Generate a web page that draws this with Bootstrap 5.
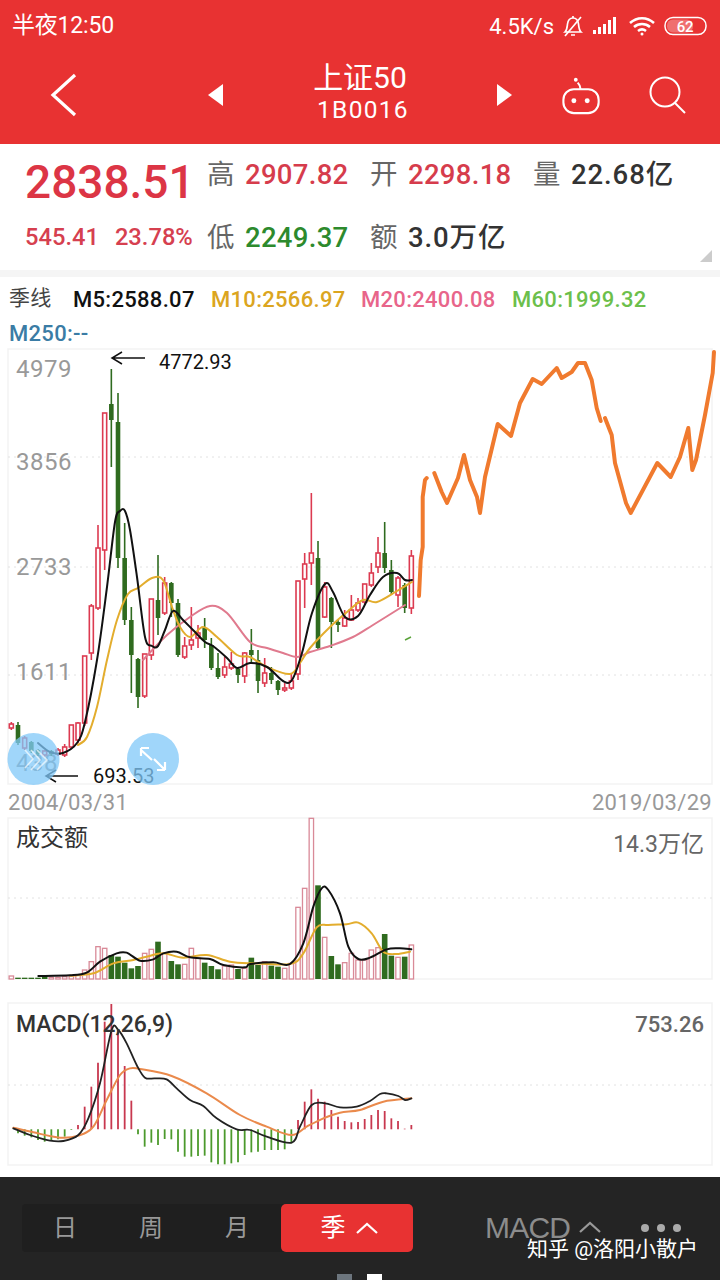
<!DOCTYPE html>
<html lang="zh">
<head>
<meta charset="utf-8">
<title>上证50</title>
<link href="https://cdn.jsdelivr.net/npm/bootstrap@5.3.0/dist/css/bootstrap.min.css" rel="stylesheet">
<style>
html,body{width:720px;height:1280px;overflow:hidden;background:#fff}
body,svg text{font-family:Roboto,"Noto Sans CJK SC",sans-serif}
.app-shell{width:720px;height:1280px;display:flex;flex-direction:column}
.top-red{background:#e83232;color:#fff;height:144px}
.status-row{height:52px;padding:0 12px;font-size:23px;letter-spacing:-.2px}
.status-net{font-size:22px;margin-right:8px;letter-spacing:0}
.nav-row{height:92px;padding-bottom:6px}
.nav-title{font-size:30px;line-height:34px;text-align:center}
.nav-code{font-size:24.5px;line-height:30px;letter-spacing:1.300px;text-align:center;padding-left:6px}
.nav-back{margin-left:50px;margin-right:129px}
.nav-mid{width:274px;margin-top:-4px}
.nav-robot{margin:0 47px 0 48px}
.quote-box{height:126px;color:#333}
.quote-row{display:flex;align-items:center}
.quote-row.first{height:62px}
.quote-row.second{height:64px}
.q-left{width:207px;padding-left:25px;flex:none}
.big-price{font-size:46px;font-weight:500;color:#dc3545;line-height:1;position:relative;top:7px}
.q-small{font-size:23.7px;font-weight:500;color:#d6404f;margin-right:16px}
.q-cell{width:163px;flex:none;display:flex;align-items:center;font-size:27.5px;white-space:nowrap}
.q-label{width:38px;color:#666;flex:none}
.q-num{font-weight:500;color:#d63c4c;letter-spacing:.3px}
.q-num.down{color:#2d8a2d}
.q-num.flat{color:#333;letter-spacing:.9px}
.corner-mark{position:absolute;right:8px;bottom:8px;width:0;height:0;border-left:12px solid transparent;border-bottom:12px solid #ccc}
.band{height:7px;background:#f5f5f5;flex:none}
.legend-row{height:38px;padding:6px 9px 0;font-size:22px;font-weight:500;white-space:nowrap;letter-spacing:.3px}
.legend-row2{height:32px;padding:2px 9px 0;font-size:22px;font-weight:500;color:#3a7ca5;letter-spacing:.3px}
.lg-name{width:64px;font-weight:400;color:#444;font-size:21px}
.lg-a{width:138px;color:#111}
.lg-b{width:150px;color:#dba520}
.lg-c{width:151px;color:#e8658a}
.lg-d{color:#6cbf4b}
.chart-svg{display:block;flex:none}
.date-row{height:30px;padding:0 8px;font-size:22px;color:#999;letter-spacing:.3px}
.bottom-bar{background:#242424;height:103px;margin-top:auto;position:relative;flex:none}
.seg-group{position:absolute;left:22px;top:27px;width:391px;height:48px;background:#1f1f1f;border-radius:4px;display:flex;color:#999}
.seg-item{display:flex;align-items:center;justify-content:center;width:86px;font-size:24px}
.seg-active{position:absolute;left:259px;top:0;width:132px;height:48px;background:#e83232;color:#fff;border-radius:5px;display:flex;align-items:center;justify-content:center;gap:9px;font-size:25px;padding-left:5px}
.macd-txt{position:absolute;left:485px;top:33px;font-family:"Liberation Sans",sans-serif;font-size:30px;color:#8c8c8c;letter-spacing:-.8px;line-height:36px}
.macd-chev{position:absolute;left:578px;top:43px}
.more-dots{position:absolute;left:641px;top:47px;gap:8px}
.more-dots span{width:8px;height:8px;background:#aaa;border-radius:50%;display:block}
.wm-text{position:absolute;left:527px;top:58px;font-size:21px;color:#fff;line-height:28px;white-space:nowrap}
.pager{position:absolute;left:337px;bottom:0;gap:15px}
.pager span{width:15px;height:6px;display:block}
</style>
</head>
<body>
<div class="app-shell">
  <div class="top-red flex-none">
    <div class="status-row d-flex align-items-center justify-content-between">
      <span>半夜12:50</span>
      <div class="d-flex align-items-center">
        <span class="status-net">4.5K/s</span>
        <svg width="22" height="24" viewBox="0 0 22 24" class="me-2" fill="none" stroke="#fff" stroke-width="1.7"><path d="M3 18c2-2 2-4 2.500-8C6 6 8 4 11 4s5 2 5.500 6c.4 4 .5 6 2.500 8z"/><path d="M9 21h4M11 2v2M3 22L19 3"/></svg>
        <svg width="28" height="22" viewBox="0 0 28 22" class="me-2" fill="#fff"><rect x="1" y="15" width="3" height="4"/><rect x="6" y="12" width="3" height="7"/><rect x="11" y="9" width="3" height="10"/><rect x="16" y="5" width="3" height="14"/><rect x="21" y="2" width="3" height="17"/></svg>
        <svg width="28" height="22" viewBox="0 0 28 22" class="me-2" fill="none" stroke="#fff" stroke-width="2.500"><path d="M2 8c7-6.500 17-6.500 24 0M6 12c4.500-4 11.500-4 16 0M10 16c2.500-2 5.500-2 8 0"/><circle cx="14" cy="19" r="1.500" fill="#fff" stroke="none"/></svg>
        <svg width="44" height="20" viewBox="0 0 44 20"><rect x="1" y="1.500" width="41" height="17" rx="8" fill="none" stroke="#fff" stroke-width="1.500"/><rect x="3" y="3.500" width="26" height="13" rx="6" fill="#fff" opacity=".3"/><text x="21" y="15.500" font-size="15" font-weight="500" fill="#fff" text-anchor="middle">62</text></svg>
      </div>
    </div>
    <div class="nav-row d-flex align-items-center">
      <svg class="nav-back flex-none" width="28" height="44" viewBox="0 0 28 44" fill="none" stroke="#fff" stroke-width="3.200"><path d="M25 2L3 22l22 20"/></svg>
      <svg class="flex-none" width="16" height="24" viewBox="0 0 16 24" fill="#fff"><path d="M16 1v22L1 12z"/></svg>
      <div class="nav-mid flex-none">
        <div class="nav-title">上证50</div>
        <div class="nav-code">1B0016</div>
      </div>
      <svg class="flex-none" width="16" height="24" viewBox="0 0 16 24" fill="#fff"><path d="M0 1v22l15-11z"/></svg>
      <svg class="flex-none nav-robot" width="41" height="40" viewBox="0 0 42 42" fill="none" stroke="#fff" stroke-width="2.200"><rect x="2" y="15" width="37" height="25" rx="11"/><path d="M20 15c0-3-1-5-3-7"/><circle cx="15" cy="5" r="2" fill="#fff" stroke="none"/><circle cx="13" cy="27" r="2.600" fill="#fff" stroke="none"/><circle cx="27" cy="27" r="2.600" fill="#fff" stroke="none"/></svg>
      <svg class="flex-none" width="38" height="38" viewBox="0 0 38 38" fill="none" stroke="#fff" stroke-width="2"><circle cx="16" cy="16" r="14.500"/><path d="M26 27l10 10"/></svg>
    </div>
  </div>

  <div class="quote-box position-relative flex-none">
    <div class="quote-row first">
      <div class="q-left"><span class="big-price">2838.51</span></div>
      <div class="q-cell"><span class="q-label">高</span><span class="q-num">2907.82</span></div>
      <div class="q-cell"><span class="q-label">开</span><span class="q-num">2298.18</span></div>
      <div class="q-cell"><span class="q-label">量</span><span class="q-num flat">22.68亿</span></div>
    </div>
    <div class="quote-row second">
      <div class="q-left d-flex"><span class="q-small">545.41</span><span class="q-small me-0">23.78%</span></div>
      <div class="q-cell"><span class="q-label">低</span><span class="q-num down">2249.37</span></div>
      <div class="q-cell"><span class="q-label">额</span><span class="q-num flat">3.0万亿</span></div>
    </div>
    <div class="corner-mark"></div>
  </div>
  <div class="band"></div>

  <div class="legend-row d-flex align-items-center">
    <span class="lg-name">季线</span><span class="lg-a">M5:2588.07</span><span class="lg-b">M10:2566.97</span><span class="lg-c">M20:2400.08</span><span class="lg-d">M60:1999.32</span>
  </div>
  <div class="legend-row2">M250:--</div>

  <svg id="mainChart" class="chart-svg" width="720" height="440" viewBox="0 347 720 440"></svg>
  <div class="date-row d-flex align-items-center justify-content-between"><span>2004/03/31</span><span>2019/03/29</span></div>
  <svg id="volChart" class="chart-svg" width="720" height="168" viewBox="0 817 720 168"></svg>
  <svg id="macdChart" class="chart-svg" width="720" height="182" viewBox="0 985 720 182"></svg>

  <div class="bottom-bar">
    <div class="seg-group">
      <div class="seg-item">日</div><div class="seg-item">周</div><div class="seg-item">月</div>
      <div class="seg-active">季<svg width="24" height="14" viewBox="0 0 24 14" fill="none" stroke="#fff" stroke-width="2.200"><path d="M2 12l10-9 10 9"/></svg></div>
    </div>
    <div class="macd-txt">MACD</div>
    <svg class="macd-chev" width="24" height="14" viewBox="0 0 24 14" fill="none" stroke="#999" stroke-width="2.200"><path d="M2 12l10-9 10 9"/></svg>
    <div class="more-dots d-flex"><span></span><span></span><span></span></div>
    <div class="wm-text">知乎 @洛阳小散户</div>
    <div class="pager d-flex"><span class="bg-secondary"></span><span class="bg-white"></span></div>
  </div>
</div>

<script>
const NS='http://www.w3.org/2000/svg';
const X=i=>11.33+6.667*i, RED='#dc3a50', GRN='#2f6b1f';
function el(p,t,a,txt){const e=document.createElementNS(NS,t);for(const k in a)e.setAttribute(k,a[k]);if(txt)e.textContent=txt;p.appendChild(e);return e}
function smooth(pts){let d='M'+pts[0];for(let i=0;i<pts.length-1;i++){const p0=pts[i-1]||pts[i],p1=pts[i],p2=pts[i+1],p3=pts[i+2]||p2;
 d+=`C${p1[0]+(p2[0]-p0[0])/6} ${p1[1]+(p2[1]-p0[1])/6} ${p2[0]-(p3[0]-p1[0])/6} ${p2[1]-(p3[1]-p1[1])/6} ${p2[0]} ${p2[1]}`}return d}
function line(s,pts,c,w){el(s,'path',{d:smooth(pts),fill:'none',stroke:c,'stroke-width':w,'stroke-linecap':'round','stroke-linejoin':'round'})}
function poly(s,pts,c,w){el(s,'polyline',{points:pts.join(' '),fill:'none',stroke:c,'stroke-width':w,'stroke-linecap':'round','stroke-linejoin':'round'})}
function frame(s,x,y,w,h,gy){el(s,'rect',{x,y,width:w,height:h,fill:'none',stroke:'#f3f3f3','stroke-width':1.5});
 gy.forEach(g=>el(s,'line',{x1:x,x2:x+w,y1:g,y2:g,stroke:'#e2e2e2','stroke-dasharray':'2 4','stroke-width':1}))}

/* MAIN */
const M=document.getElementById('mainChart');
frame(M,8,349,704,435,[457,567,675]);
[['4979',377],['3856',470],['2733',575],['1611',680]].forEach(a=>el(M,'text',{x:16,y:a[1],'font-size':24,fill:'#999','letter-spacing':.5},a[0]));
el(M,'text',{x:16,y:771,'font-size':24,fill:'#8a8a8a','letter-spacing':.5},'438');
const C=[['r',722,724,728,730],['g',722,725,743,745],['r',736,738,748,750],['g',741,742,751,753],['g',749,750,754,756],['r',750,751,755,757],['g',750,751,754,756],['r',748,750,754,756],
['r',744,747,755,757],['r',725,725,747,749],['r',722,723,740,743],['r',656,656,723,726],['r',604,606,653,660],['r',525,548,608,610],['r',413,413,550,570],
['g',369,404,420,467],['g',393,422,558,568],['g',523,558,620,625],['g',607,620,655,693],['g',658,659,697,708],['r',654,654,696,698],['r',599,599,655,660],['g',555,600,618,635],['r',577,583,613,615],['g',582,583,603,617],
['g',599,603,655,657],['r',637,646,657,659],['r',607,640,645,650],['r',625,633,638,648],['g',618,628,640,648],['g',638,645,668,670],['g',653,668,677,679],['r',657,667,675,678],['r',652,664,668,670],['g',667,669,675,683],
['r',652,653,676,683],['g',629,650,655,664],['g',650,660,681,693],['r',658,673,683,687],['g',667,673,680,684],['g',680,681,690,695],['r',683,688,690,692],['r',673,681,688,690],['r',581,581,674,680],['r',553,564,579,608],
['r',493,553,563,585],['g',541,558,648,650],['r',582,587,617,618],['g',597,598,622,648],['g',620,622,625,632],['r',610,618,626,627],['r',595,610,620,621],['r',598,603,610,612],['r',584,584,602,604],['r',563,573,585,587],
['r',537,553,567,573],['g',522,553,568,573],['g',560,570,592,595],['r',576,578,595,607],['g',583,585,608,613],['r',550,556,608,614]];
C.forEach((c,i)=>{const x=X(i),col=c[0]=='r'?RED:GRN;
 el(M,'line',{x1:x,x2:x,y1:c[1],y2:c[4],stroke:col,'stroke-width':1.6});
 if(c[0]=='r')el(M,'rect',{x:x-2,y:c[2],width:4,height:c[3]-c[2],fill:'#fff',stroke:col,'stroke-width':1.6});
 else el(M,'rect',{x:x-2.300,y:c[2],width:4.6,height:c[3]-c[2],fill:col});});
line(M,[[143,660],[167,635],[190,617],[210,606],[227,613],[250,642],[267,648],[283,653],[297,657],[310,652],[330,646],[353,637],[373,625],[405,605]],'#e07a8e',2);
line(M,[[78,745],[87,737],[97,707],[107,660],[117,620],[128,594],[138,588],[152,578],[163,580],[172,607],[180,627],[190,637],[203,627],[217,637],[237,655],[250,657],[267,667],[290,674],[300,663],[310,648],[330,627],[347,612],[363,600],[377,602],[397,591],[412,582]],'#e3ad2d',2);
line(M,[[38,743],[50,752],[63,753],[77,743],[85,722],[97,660],[107,587],[115,522],[120,511],[125,511],[130,530],[137,577],[145,637],[152,646],[158,646],[165,630],[173,611],[183,620],[193,630],[205,642],[213,646],[227,658],[237,668],[250,663],[267,667],[283,681],[292,680],[302,653],[312,613],[325,584],[333,592],[345,617],[358,616],[370,595],[383,577],[397,573],[405,580],[412,580]],'#111',2);
el(M,'line',{x1:405,y1:640,x2:411,y2:637,stroke:'#5aa33a','stroke-width':1.500});
const OR='#f07a2e';
poly(M,[[419,596],[420.7,560],[422.7,547],[422.7,497],[425,480],[426.7,478]],OR,4);
poly(M,[[434.3,473],[441.7,492],[447,503],[458,478],[464,455],[470,480],[477,497],[480,513],[485,477],[497.7,424],[511,436],[520,403],[532.7,379],[541.7,384],[556.7,368],[561.7,378],[571.7,372],[578,363],[585,363],[591.7,380],[596.7,408],[600.7,421]],OR,4);
poly(M,[[605,418],[611.7,435],[615,463],[626,503],[630.7,513],[657.3,463],[670.7,477],[680,457],[688.3,428],[692.3,470],[696,460],[705,415],[712.7,373],[714,352]],OR,4);
/* annotations */
el(M,'path',{d:'M145 358H112M122 352l-10 6 10 6M78 776H46M56 770l-10 6 10 6',fill:'none',stroke:'#111','stroke-width':1.500});
el(M,'text',{x:159,y:369,'font-size':20,fill:'#111'},'4772.93');
el(M,'text',{x:93,y:783,'font-size':20,fill:'#111'},'693.53');
/* round buttons */
el(M,'circle',{cx:33.5,cy:759,r:26,fill:'#80c8f8','fill-opacity':.75});
el(M,'circle',{cx:153,cy:759,r:26,fill:'#80c8f8','fill-opacity':.75});
el(M,'path',{d:'M25 750l8 9-8 9M31 750l9 10-9 10M37 750l10 10-10 10',fill:'none',stroke:'#fff','stroke-width':1.600,opacity:.65});
el(M,'path',{d:'M141 750l11 10M141 748v8M141 748h8M165 770l-11-11M165 770v-8M165 770h-8',fill:'none',stroke:'#fff','stroke-width':2.200});

/* VOLUME */
const V=document.getElementById('volChart');
frame(V,8,818,704,161,[898]);
el(V,'text',{x:16,y:846,'font-size':24,fill:'#333'},'成交额');
el(V,'text',{x:704,y:852,'font-size':23,fill:'#666','text-anchor':'end'},'14.3万亿');
const v='r498 g503 g503 g503 g503 g498 r502 r502 r500 r497 r495 r480 r455 r410 r415 g435 g440 g458 g475 g468 r430 r418 g395 r430 g453 g463 r463 r415 r445 g458 g468 g478 r468 r465 g477 r475 g443 g465 r455 g467 g470 r475 r460 r292 r235 r25 g226 r382 g438 g463 r458 r430 r450 r450 r420 r413 g372 g437 r442 g440 r405'.split(' ');
v.forEach((b,i)=>{const t=810+(+b.slice(1))/3,x=X(i),h=979-t;
 if(b[0]=='r')el(V,'rect',{x:x-2.2,y:t,width:4.4,height:h,fill:'#fff',stroke:'#d98a98','stroke-width':1.300});
 else el(V,'rect',{x:x-2.800,y:t,width:5.6,height:h,fill:GRN});});
const z=a=>a.map(q=>[q[0]/3,810+q[1]/3]);
line(V,z([[210,497],[280,490],[340,460],[400,450],[440,440],[490,430],[550,443],[620,435],[690,455],[760,460],[870,462],[910,430],[950,352],[985,345],[1040,343],[1075,338],[1115,370],[1150,425],[1190,432],[1230,425]]),'#e3ad2d',2);
line(V,z([[115,498],[210,496],[260,488],[300,455],[350,430],[380,428],[420,452],[460,448],[490,430],[530,425],[570,442],[630,447],[670,465],[735,472],[750,462],[820,457],[870,462],[910,400],[940,290],[965,235],[985,240],[1020,310],[1045,410],[1075,447],[1110,443],[1160,418],[1200,415],[1234,418]]),'#111',2);

/* MACD */
const D=document.getElementById('macdChart');
frame(D,8,1003,704,162,[1085]);
const mb=[418,430,437,442,450,455,450,448,440,420,405,350,290,218,95,42,120,228,332,433,470,458,465,447,448,485,500,500,498,497,517,523,523,520,517,495,487,485,480,480,480,478,460,390,335,298,326,335,360,380,393,397,396,387,375,360,363,385,393,416,405];
mb.forEach((t,i)=>{if(i==0)return;const x=X(i),y=990+t/3,zero=1129.3;
 el(D,'line',{x1:x,x2:x,y1:zero,y2:y,stroke:t>418?'#4c9a2c':'#c8384f','stroke-width':1.800});});
const zm=a=>a.map(q=>[q[0]/3,990+q[1]/3]);
line(D,zm([[40,413],[100,427],[180,443],[235,437],[280,410],[320,330],[360,255],[390,235],[420,237],[515,258],[620,310],[720,375],[800,410],[875,435],[920,410],[970,385],[1020,368],[1080,360],[1150,335],[1234,325]]),'#ea8a4c',2);
line(D,zm([[40,415],[90,435],[150,452],[190,453],[235,435],[265,385],[300,280],[335,120],[355,120],[380,160],[410,225],[435,263],[465,265],[500,268],[530,295],[570,330],[610,348],[650,385],[710,418],[750,420],[800,440],[875,458],[900,410],[935,345],[975,340],[1020,352],[1070,350],[1110,333],[1140,312],[1160,310],[1195,318],[1215,330],[1234,325]]),'#222',1.800);
el(D,'text',{x:16,y:1032,'font-size':23,'font-weight':500,fill:'#333'},'MACD(12,26,9)');
el(D,'text',{x:704,y:1032,'font-size':22,'font-weight':500,fill:'#666','text-anchor':'end'},'753.26');
</script>
</body>
</html>
